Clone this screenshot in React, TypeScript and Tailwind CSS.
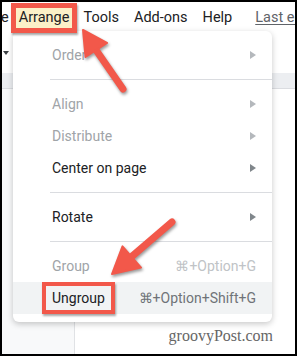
import React from "react";

type Item = {
  label: string;
  disabled?: boolean;
  sub?: boolean;
  shortcut?: string;
};

const Chevron = ({ disabled }: { disabled?: boolean }) => (
  <svg width="6" height="8" viewBox="0 0 6 8" className="ml-auto">
    <path d="M0 0 L6 4 L0 8 Z" fill={disabled ? "#b4b8bc" : "#80868b"} />
  </svg>
);

function Row({ label, disabled, sub, shortcut }: Item) {
  return (
    <div
      className={`flex h-[32px] items-center pl-[39px] pr-[16px] ${
        disabled ? "text-[#a0a4a8]" : "text-[#202124]"
      }`}
    >
      <span>{label}</span>
      {sub && <Chevron disabled={disabled} />}
      {shortcut && (
        <span className={`ml-auto ${disabled ? "text-[#c0c3c6]" : "text-[#7d8186]"}`}>{shortcut}</span>
      )}
    </div>
  );
}

const Sep = () => <div className="my-[8px] ml-[37px] h-px bg-[#dadce0]" />;

export default function App() {
  return (
    <div className="relative flex h-[356px] w-[297px] flex-col overflow-hidden border-2 border-black bg-white font-['Roboto','Liberation_Sans',sans-serif]">
      {/* menu bar */}
      <div className="flex h-[31px] items-start whitespace-nowrap pt-[1px] text-[14.5px] text-[#202124]">
        <span className="-ml-[1px] mt-[6px] leading-[18px]">e</span>
        <span className="relative z-20 ml-[2px] flex h-[30px] items-center border-[5px] border-[#f2584a] bg-[#fbf0c8] px-[3px] shadow-[1px_2px_2px_rgba(0,0,0,0.35)]">
          Arrange
        </span>
        <span className="ml-[6px] mt-[6px] leading-[18px]">Tools</span>
        <span className="ml-[15px] mt-[6px] leading-[18px]">Add-ons</span>
        <span className="ml-[15px] mt-[6px] leading-[18px]">Help</span>
        <span className="ml-[23px] mt-[6px] leading-[18px] text-[#5f6368] underline underline-offset-2">Last edit was seconds ago</span>
      </div>

      {/* toolbar */}
      <div className="flex h-[40px] items-center pl-[1px]">
        <svg width="6" height="4" viewBox="0 0 6 4">
          <path d="M0 0 L6 0 L3 4 Z" fill="#3c4043" />
        </svg>
      </div>
      <div className="h-[16px] border-b border-[#dadce0] bg-[#eceef1]" />

      {/* workspace */}
      <div className="flex flex-1">
        <div className="w-[73px] border-r border-[#e0e2e5] bg-[#f8f9fa]" />
        <div className="flex flex-1 items-end justify-end pb-[6px] pr-[22px]">
          <span className="font-['Liberation_Serif',serif] text-[16px] text-[#666]">groovyPost.com</span>
        </div>
      </div>

      {/* dropdown menu */}
      <div className="absolute left-[11px] top-[29px] z-10 w-[259px] rounded-[6px] bg-white py-[8px] text-[14px] shadow-[0_2px_6px_rgba(0,0,0,0.22)]">
        <Row label="Order" disabled sub />
        <Sep />
        <Row label="Align" disabled sub />
        <Row label="Distribute" disabled sub />
        <Row label="Center on page" sub />
        <Sep />
        <Row label="Rotate" sub />
        <Sep />
        <Row label="Group" disabled shortcut="⌘+Option+G" />
        <div className="flex h-[32px] items-center bg-[#f1f3f4] pl-[39px] pr-[16px] text-[#202124]">
          <span className="-ml-[10px] flex h-[32px] items-center border-[4px] border-[#f2584a] px-[6px] shadow-[1px_2px_2px_rgba(0,0,0,0.35)]">
            Ungroup
          </span>
          <span className="ml-auto text-[#6f7378]">⌘+Option+Shift+G</span>
        </div>
      </div>

      {/* annotation arrows */}
      <svg
        className="pointer-events-none absolute left-[-2px] top-[-2px] z-30 drop-shadow-[1px_2px_1.5px_rgba(0,0,0,0.4)]"
        width="297"
        height="356"
        viewBox="0 0 297 356"
      >
        <g fill="#f2584a" stroke="#f2584a" strokeLinecap="round" strokeLinejoin="round">
          <line x1="123" y1="89" x2="96" y2="50" strokeWidth="7" />
          <polygon points="83,30 107,43 85.5,57" strokeWidth="2" />
          <line x1="172" y1="222" x2="130" y2="258" strokeWidth="7" />
          <polygon points="112,274 122.5,246.4 141,267.6" strokeWidth="2" />
        </g>
      </svg>
    </div>
  );
}
